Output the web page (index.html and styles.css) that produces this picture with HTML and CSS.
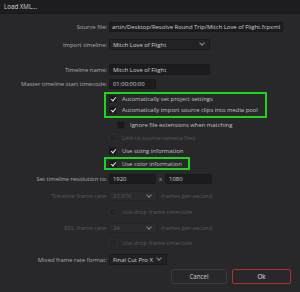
FILE: index.html
```html
<!DOCTYPE html>
<html lang="en">
<head>
    <meta charset="UTF-8">
    <title>Load XML...</title>
    <link rel="stylesheet" href="styles.css">
</head>
<body>
    <div class="dialog">
        <div class="titlebar">Load XML...</div>

        <div class="form">
            <div class="row r-source">
                <label class="lbl">Source file:</label>
                <div class="field w-source">artin/Desktop/Resolve Round Trip/Mitch Love of Flight.fcpxml</div>
            </div>
            <div class="row r-import">
                <label class="lbl">Import timeline:</label>
                <div class="field select w-import">Mitch Love of Flight <span class="chev"></span></div>
            </div>
            <div class="row r-name">
                <label class="lbl">Timeline name:</label>
                <div class="field w-import">Mitch Love of Flight</div>
            </div>
            <div class="row r-tc">
                <label class="lbl">Master timeline start timecode:</label>
                <div class="field w-tc">01:00:00:00</div>
            </div>

            <div class="highlight hl-auto">
                <div class="check c-first"><span class="box on"></span>Automatically set project settings</div>
                <div class="check"><span class="box on"></span>Automatically import source clips into media pool</div>
            </div>
            <div class="check indent"><span class="box"></span>Ignore file extensions when matching</div>
            <div class="check disabled"><span class="box"></span>Link to source camera files</div>
            <div class="check"><span class="box on"></span>Use sizing information</div>
            <div class="highlight hl-color">
                <div class="check"><span class="box on"></span>Use color information</div>
            </div>

            <div class="row r-res">
                <label class="lbl">Set timeline resolution to:</label>
                <div class="field w-res">1920</div>
                <span class="times">x</span>
                <div class="field w-res">1080</div>
            </div>
            <div class="row r-fps disabled">
                <label class="lbl">Timeline frame rate:</label>
                <div class="field select w-fps">23.976 <span class="chev"></span></div>
                <span class="unit">frames per second</span>
            </div>
            <div class="check disabled c-drop1"><span class="box"></span>Use drop frame timecode</div>
            <div class="row r-edl disabled">
                <label class="lbl">EDL frame rate:</label>
                <div class="field select w-fps">24 <span class="chev"></span></div>
                <span class="unit">frames per second</span>
            </div>
            <div class="check disabled c-drop2"><span class="box"></span>Use drop frame timecode</div>
            <div class="row r-mixed">
                <label class="lbl">Mixed frame rate format:</label>
                <div class="field select w-mixed">Final Cut Pro X <span class="chev"></span></div>
            </div>
        </div>

        <div class="buttons">
            <button class="btn">Cancel</button>
            <button class="btn ok">Ok</button>
        </div>
    </div>
</body>
</html>
```

FILE: styles.css
```css
body {
    margin: 0;
    background-color: #28282b;
    font-family: "Open Sans", Arial, sans-serif;
    font-size: 5.9px;
    color: #acacaf;
}
.dialog {
    width: 300px;
    height: 292px;
    overflow: hidden;
}
.titlebar {
    height: 13px;
    line-height: 13px;
    padding-left: 4px;
    background-color: #1d1d20;
    color: #d6d6d8;
    font-size: 6.2px;
    border-bottom: 1px solid #19191b;
}
.form {
    padding-top: 7px;
}
.row {
    display: flex;
    align-items: center;
    height: 11px;
}
.lbl {
    width: 107px;
    padding-right: 2px;
    text-align: right;
    white-space: nowrap;
    flex-shrink: 0;
}
.field {
    position: relative;
    box-sizing: border-box;
    height: 10px;
    line-height: 9px;
    padding-left: 3px;
    background-color: #1c1c1f;
    border: 1px solid #19191b;
    border-radius: 1px;
    color: #cdcdd0;
    white-space: nowrap;
    overflow: hidden;
}
.select {
    background-color: #222225;
}
.chev {
    position: absolute;
    right: 5px;
    top: 1px;
    width: 3px;
    height: 3px;
    border-right: 1px solid #8a8a8e;
    border-bottom: 1px solid #8a8a8e;
    transform: rotate(45deg);
}
.w-source { width: 174px; padding-left: 2px; }
.w-import { width: 101px; height: 11px; line-height: 10px; }
.w-tc { width: 47px; }
.w-res { width: 47px; }
.w-fps { width: 48px; }
.w-mixed { width: 58px; height: 11px; line-height: 10px; }

.r-import { margin-top: 7px; }
.r-name { margin-top: 14px; }
.r-tc { margin-top: 3px; }

.times {
    margin: 0 3px;
}
.unit {
    margin-left: 4px;
}

.highlight {
    box-sizing: border-box;
    margin-left: 104px;
    border: 2px solid #1fd41f;
}
.hl-auto {
    width: 163px;
    height: 26px;
    margin-top: 3px;
    padding-left: 3px;
}
.hl-auto .check {
    margin-left: 0;
    height: 12px;
}
.hl-auto .c-first {
    height: 10px;
}
.hl-color {
    width: 86px;
    height: 13px;
    padding-left: 3px;
}
.hl-color .check {
    margin-left: 0;
    height: 9px;
}

.check {
    display: flex;
    align-items: center;
    height: 13px;
    margin-left: 109px;
    white-space: nowrap;
    color: #c0c0c3;
}
.check.indent {
    margin-left: 117px;
}
.box {
    box-sizing: border-box;
    width: 8px;
    height: 8px;
    margin-right: 5px;
    background-color: #18181a;
    border: 1px solid #202023;
    border-radius: 1px;
    position: relative;
    flex-shrink: 0;
}
.box.on::after {
    content: "";
    position: absolute;
    left: 2px;
    top: 0;
    width: 2px;
    height: 4px;
    border-right: 1px solid #e8e8ea;
    border-bottom: 1px solid #e8e8ea;
    transform: rotate(40deg);
}
.disabled,
.disabled .field,
.check.disabled {
    color: #58585c;
}
.disabled .box {
    background-color: #252528;
    border-color: #2e2e31;
}
.disabled .field {
    background-color: #2b2b2e;
    border-color: #242427;
}

.r-res { margin-top: 3px; }
.r-fps { margin-top: 6px; }
.c-drop1 { margin-top: 4px; }
.r-edl { margin-top: 4px; }
.c-drop2 { margin-top: 3px; }
.r-mixed { margin-top: 5px; }

.buttons {
    display: flex;
    justify-content: flex-end;
    gap: 5px;
    padding-right: 9px;
    margin-top: 4px;
}
.btn {
    box-sizing: border-box;
    width: 56px;
    height: 15px;
    background-color: #28282b;
    border: 1px solid #3b3b3f;
    border-radius: 2px;
    color: #c8c8ca;
    font-family: "Open Sans", Arial, sans-serif;
    font-size: 6.2px;
    padding: 0;
}
.btn.ok {
    width: 59px;
    border: 1px solid #b3302c;
    color: #e0e0e2;
}
```
